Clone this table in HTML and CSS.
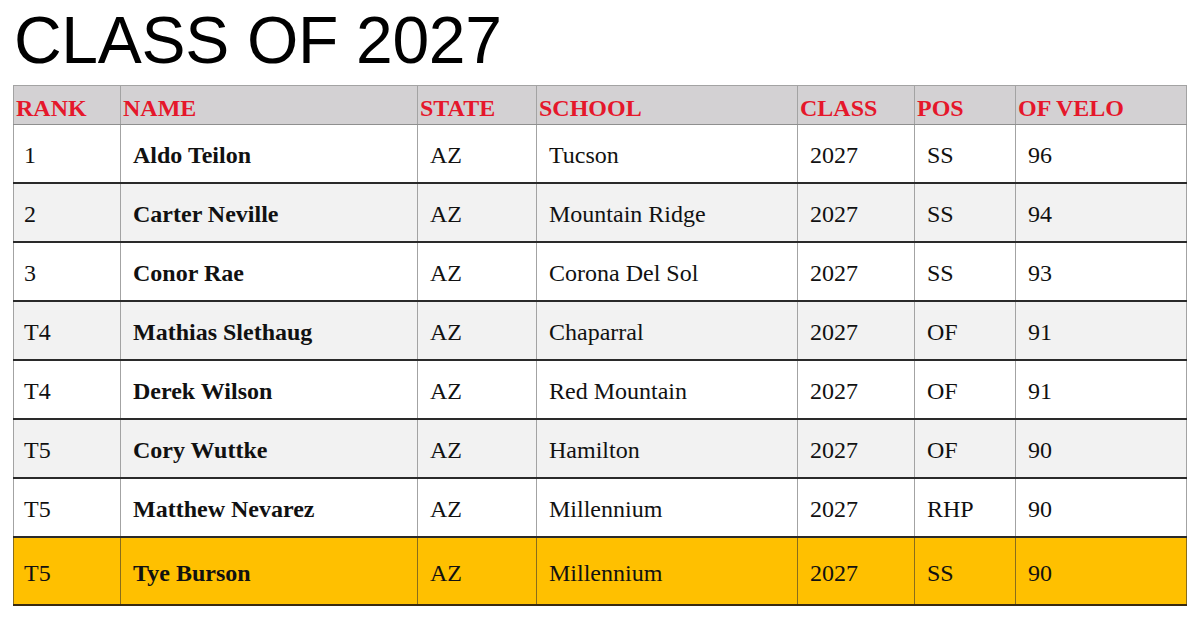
FILE: index.html
```html
<!DOCTYPE html>
<html>
<head>
<meta charset="utf-8">
<link rel="stylesheet" href="styles.css">
</head>
<body>
<div class="page">
  <h1 class="title">CLASS OF 2027</h1>
  <table class="rank-table">
    <colgroup>
      <col class="c-rank"><col class="c-name"><col class="c-state"><col class="c-school"><col class="c-class"><col class="c-pos"><col class="c-velo">
    </colgroup>
    <thead>
      <tr><th>RANK</th><th>NAME</th><th>STATE</th><th>SCHOOL</th><th>CLASS</th><th>POS</th><th>OF VELO</th></tr>
    </thead>
    <tbody>
      <tr class="odd"><td>1</td><td class="name">Aldo Teilon</td><td>AZ</td><td>Tucson</td><td>2027</td><td>SS</td><td>96</td></tr>
      <tr class="even"><td>2</td><td class="name">Carter Neville</td><td>AZ</td><td>Mountain Ridge</td><td>2027</td><td>SS</td><td>94</td></tr>
      <tr class="odd"><td>3</td><td class="name">Conor Rae</td><td>AZ</td><td>Corona Del Sol</td><td>2027</td><td>SS</td><td>93</td></tr>
      <tr class="even"><td>T4</td><td class="name">Mathias Slethaug</td><td>AZ</td><td>Chaparral</td><td>2027</td><td>OF</td><td>91</td></tr>
      <tr class="odd"><td>T4</td><td class="name">Derek Wilson</td><td>AZ</td><td>Red Mountain</td><td>2027</td><td>OF</td><td>91</td></tr>
      <tr class="even"><td>T5</td><td class="name">Cory Wuttke</td><td>AZ</td><td>Hamilton</td><td>2027</td><td>OF</td><td>90</td></tr>
      <tr class="odd"><td>T5</td><td class="name">Matthew Nevarez</td><td>AZ</td><td>Millennium</td><td>2027</td><td>RHP</td><td>90</td></tr>
      <tr class="highlight"><td>T5</td><td class="name">Tye Burson</td><td>AZ</td><td>Millennium</td><td>2027</td><td>SS</td><td>90</td></tr>
    </tbody>
  </table>
</div>
</body>
</html>
```
FILE: styles.css
```css
html, body {
  margin: 0;
  padding: 0;
  background: #ffffff;
}
.page {
  padding: 7px 0 0 13px;
}
.title {
  margin: 0 0 12px 1px;
  font-family: "Liberation Sans", Arial, sans-serif;
  font-weight: normal;
  font-size: 66px;
  line-height: 66px;
  color: #000;
  letter-spacing: -0.3px;
}
.rank-table {
  border-collapse: collapse;
  table-layout: fixed;
  width: 1173px;
  font-family: "Liberation Serif", "Times New Roman", serif;
  font-size: 24px;
  color: #111;
  border: 1px solid #a3a3a3;
}
.c-rank { width: 107px; }
.c-name { width: 297px; }
.c-state { width: 119px; }
.c-school { width: 261px; }
.c-class { width: 117px; }
.c-pos { width: 101px; }
.c-velo { width: 171px; }
.rank-table th {
  background: #d3d1d3;
  color: #e5172b;
  font-weight: bold;
  text-align: left;
  vertical-align: bottom;
  height: 36px;
  padding: 0 2px 2px 2px;
  border-left: 1px solid #a3a3a3;
  border-right: 1px solid #a3a3a3;
  border-bottom: 1px solid #8f8f8f;
  line-height: 28px;
  white-space: nowrap;
}
.rank-table td {
  height: 53px;
  padding: 4px 12px 0 12px;
  vertical-align: middle;
  text-align: left;
  border-left: 1px solid #a3a3a3;
  border-right: 1px solid #a3a3a3;
  border-bottom: 2px solid #2a2a2a;
  white-space: nowrap;
}
.rank-table td:first-child {
  padding-left: 10px;
}
.rank-table td.name {
  font-weight: bold;
}
.rank-table tr.odd td { background: #ffffff; }
.rank-table tr.even td { background: #f2f2f2; }
.rank-table tr.highlight td {
  background: #ffc000;
  height: 62px;
  border-left-color: #8a6d1a;
  border-right-color: #8a6d1a;
  border-bottom: 2px solid #3a2a10;
}
```
